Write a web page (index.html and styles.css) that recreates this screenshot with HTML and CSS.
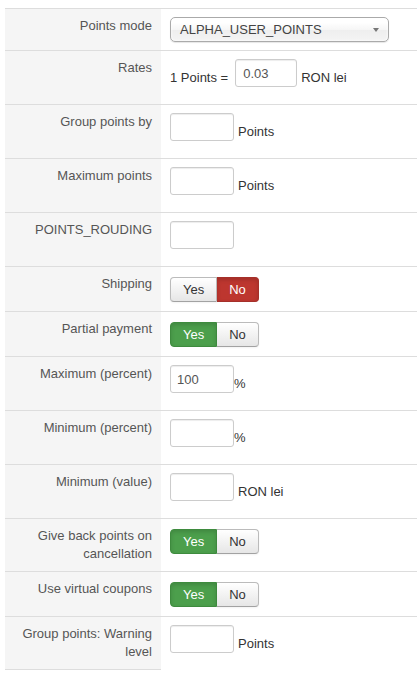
FILE: index.html
```html
<!DOCTYPE html>
<html>
<head>
<meta charset="utf-8">
<link rel="stylesheet" href="styles.css">
</head>
<body>
<table class="form">
  <tr>
    <td class="key">Points mode</td>
    <td class="val">
      <div class="select"><span>ALPHA_USER_POINTS</span><i class="caret"></i></div>
    </td>
  </tr>
  <tr>
    <td class="key">Rates</td>
    <td class="val">
      <div class="line"><span class="txt">1 Points =</span><input class="inp inp-rate" type="text" value="0.03"><span class="txt suffix">RON lei</span></div>
    </td>
  </tr>
  <tr>
    <td class="key">Group points by</td>
    <td class="val"><div class="line"><input class="inp" type="text" value=""><span class="txt suffix">Points</span></div></td>
  </tr>
  <tr>
    <td class="key">Maximum points</td>
    <td class="val"><div class="line"><input class="inp" type="text" value=""><span class="txt suffix">Points</span></div></td>
  </tr>
  <tr>
    <td class="key">POINTS_ROUDING</td>
    <td class="val"><div class="line"><input class="inp" type="text" value=""></div></td>
  </tr>
  <tr>
    <td class="key">Shipping</td>
    <td class="val"><div class="toggle"><span class="btn">Yes</span><span class="btn no-on">No</span></div></td>
  </tr>
  <tr>
    <td class="key">Partial payment</td>
    <td class="val"><div class="toggle"><span class="btn yes-on">Yes</span><span class="btn">No</span></div></td>
  </tr>
  <tr>
    <td class="key">Maximum (percent)</td>
    <td class="val"><div class="line"><input class="inp" type="text" value="100"><span class="txt pct">%</span></div></td>
  </tr>
  <tr>
    <td class="key">Minimum (percent)</td>
    <td class="val"><div class="line"><input class="inp" type="text" value=""><span class="txt pct">%</span></div></td>
  </tr>
  <tr>
    <td class="key">Minimum (value)</td>
    <td class="val"><div class="line"><input class="inp" type="text" value=""><span class="txt suffix">RON lei</span></div></td>
  </tr>
  <tr>
    <td class="key">Give back points on cancellation</td>
    <td class="val"><div class="toggle"><span class="btn yes-on">Yes</span><span class="btn">No</span></div></td>
  </tr>
  <tr>
    <td class="key">Use virtual coupons</td>
    <td class="val"><div class="toggle"><span class="btn yes-on">Yes</span><span class="btn">No</span></div></td>
  </tr>
  <tr class="last">
    <td class="key">Group points: Warning level</td>
    <td class="val"><div class="line line-tight"><input class="inp" type="text" value=""><span class="txt suffix">Points</span></div></td>
  </tr>
</table>
</body>
</html>
```
FILE: styles.css
```css
html, body {
  background: #fff;
}
body {
  margin: 8px 0 0 5px;
  font-family: "Liberation Sans", Arial, sans-serif;
  font-size: 13px;
  line-height: 18px;
  color: #333;
}
.form {
  border-collapse: collapse;
  width: 100%;
}
.form td {
  border-top: 1px solid #ddd;
  vertical-align: top;
  padding: 8px 8px 8px 9px;
}
.form td.key {
  width: 137px;
  padding: 8px 9px 8px 10px;
  background: #f5f5f5;
  text-align: right;
  color: #555;
}
.form tr.last td.key {
  border-bottom: 1px solid #ddd;
}
.form td.val {
  background: #fff;
}

/* select */
.select {
  box-sizing: border-box;
  width: 219px;
  height: 25px;
  border: 1px solid #aaa;
  border-radius: 5px;
  background: linear-gradient(#fff 20%, #f6f6f6 50%, #eee 52%, #f4f4f4 100%);
  box-shadow: 0 0 3px #fff inset, 0 1px 1px rgba(0,0,0,.1);
  display: flex;
  align-items: center;
  justify-content: space-between;
  padding: 1px 9px 0 9px;
  color: #444;
  line-height: 22px;
}
.caret {
  width: 0;
  height: 0;
  border-left: 3px solid transparent;
  border-right: 3px solid transparent;
  border-top: 4px solid #777;
}

/* text inputs */
.line {
  display: flex;
  align-items: flex-end;
  margin-bottom: 9px;
}
.line-tight {
  margin-bottom: 8px;
}
.inp {
  box-sizing: border-box;
  width: 64px;
  height: 28px;
  margin: 0;
  padding: 4px 6px;
  border: 1px solid #ccc;
  border-radius: 3px;
  background: #fff;
  box-shadow: inset 0 1px 1px rgba(0,0,0,.075);
  font-family: "Liberation Sans", Arial, sans-serif;
  font-size: 13px;
  line-height: 18px;
  color: #555;
  outline: none;
}
.inp-rate {
  width: 62px;
  margin-left: 7px;
  padding-left: 7px;
}
.txt {
  line-height: 18px;
  white-space: nowrap;
}
.suffix {
  margin-left: 4px;
}
.pct {
  margin-left: 0;
}

/* toggle buttons */
.toggle {
  display: inline-flex;
  margin: 2px 0 1px 0;
}
.btn {
  display: block;
  height: 25px;
  box-sizing: border-box;
  padding: 2px 12px;
  line-height: 19px;
  border: 1px solid #bbb;
  border-bottom-color: #a2a2a2;
  background: linear-gradient(#fff, #e6e6e6);
  color: #333;
  box-shadow: inset 0 1px 0 rgba(255,255,255,.2), 0 1px 2px rgba(0,0,0,.05);
}
.btn:first-child {
  border-radius: 4px 0 0 4px;
}
.btn:last-child {
  border-radius: 0 4px 4px 0;
  border-left: 0;
}
.btn.no-on {
  background: #bd362f;
  border-color: #a5302a;
  color: #fff;
  box-shadow: inset 0 2px 4px rgba(0,0,0,.15);
}
.btn.yes-on {
  background: #4c9f4c;
  border-color: #3e8b3e;
  color: #fff;
  box-shadow: inset 0 2px 4px rgba(0,0,0,.15);
}
```
